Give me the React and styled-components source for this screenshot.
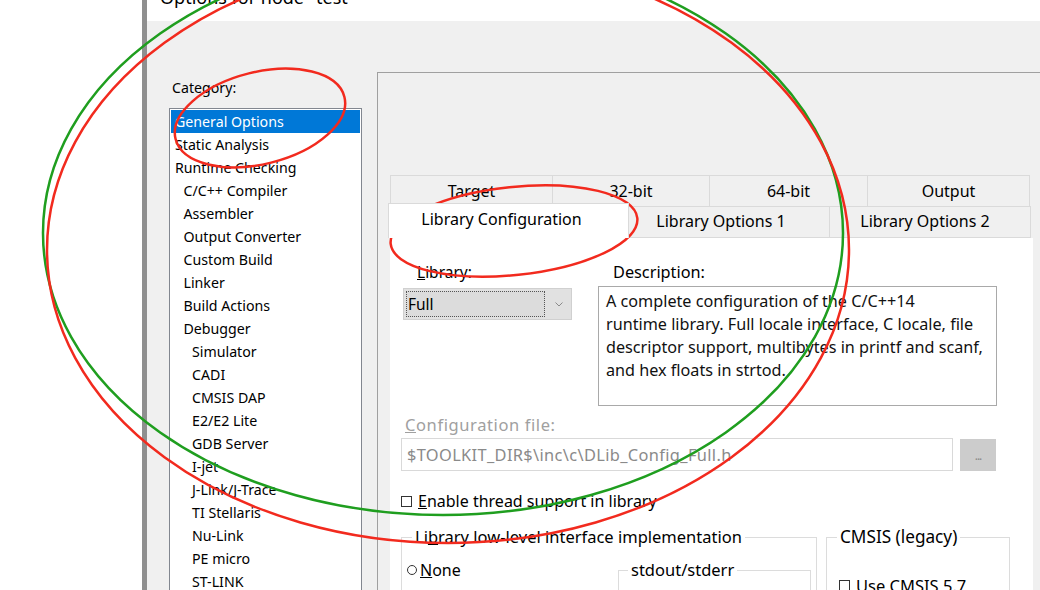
import React from 'react';
import styled, { createGlobalStyle } from 'styled-components';

const Global = createGlobalStyle`
  html, body { margin: 0; padding: 0; background: #fff; }
  body { font-family: "Noto Sans", "Open Sans", sans-serif; color: #000; }
  #root { width: 1040px; height: 590px; overflow: hidden; }
  * { box-sizing: border-box; }
`;

const Page = styled.div`
  position: relative;
  width: 1040px;
  height: 590px;
  overflow: hidden;
  display: flex;
  background: #fff;
`;

const Desktop = styled.div`
  width: 142px;
  flex-shrink: 0;
  background: #fff;
`;

const Window = styled.div`
  flex: 1;
  min-width: 0;
  display: flex;
  flex-direction: column;
  border-left: 5px solid #8f8f8f;
`;

const TitleBar = styled.div`
  height: 21px;
  flex-shrink: 0;
  background: #fff;
  overflow: hidden;
  padding-left: 13px;
`;

const TitleText = styled.div`
  font-size: 18px;
  line-height: 18px;
  margin-top: -12px;
  white-space: nowrap;
`;

const Body = styled.div`
  flex: 1;
  min-height: 0;
  background: #f0f0f0;
  display: flex;
  align-items: stretch;
  gap: 15px;
  padding: 51px 0 0 22px;
  overflow: hidden;
`;

const CategoryColumn = styled.div`
  width: 193px;
  flex-shrink: 0;
  padding-top: 6px;
`;

const CategoryLabel = styled.div`
  font-size: 14.2px;
  line-height: 20px;
  padding-left: 3px;
  margin-bottom: 10px;
`;

const CategoryList = styled.div`
  background: #fff;
  border: 1px solid #828790;
  padding: 1px;
  height: 540px;
`;

const CategoryItem = styled.div`
  height: 23px;
  line-height: 23px;
  font-size: 14.2px;
  white-space: nowrap;
  padding-left: ${p => 4 + p.$level * 8.5}px;
  background: ${p => (p.$selected ? '#0078d7' : 'transparent')};
  color: ${p => (p.$selected ? '#fff' : '#000')};
`;

const RightPanel = styled.div`
  flex: 1;
  min-width: 0;
  border-top: 1px solid #a0a0a0;
  border-left: 1px solid #a0a0a0;
  padding: 102px 0 0 12px;
  display: flex;
  flex-direction: column;
`;

const TabRowBack = styled.div`
  display: flex;
  height: 31px;
  margin-left: 1px;
`;

const TabRowFront = styled.div`
  display: flex;
  height: 32px;
  margin-left: -1px;
`;

const Tab = styled.div`
  width: ${p => p.$w}px;
  flex-shrink: 0;
  border: 1px solid #dadada;
  margin-left: -1px;
  background: ${p => (p.$active ? '#fff' : '#f0f0f0')};
  font-size: 16px;
  text-align: center;
  white-space: nowrap;
  line-height: ${p => (p.$active ? 30 : 29)}px;
  height: ${p => (p.$active ? 35 : 32)}px;
  margin-top: ${p => (p.$active ? -3 : 0)}px;
  padding-right: ${p => p.$shift || 0}px;
  ${p => (p.$active ? 'border-bottom: none; position: relative; z-index: 1;' : '')}
  ${p => (p.$back ? 'height: 31px; border-bottom: none; line-height: 30px;' : '')}
`;

const ContentPane = styled.div`
  width: 643px;
  flex: 1;
  background: #fff;
  padding: 24px 0 0 11px;
  display: flex;
  flex-direction: column;
`;

const TopSection = styled.div`
  display: flex;
  gap: 26px;
  margin-left: 2px;
`;

const FieldColumn = styled.div`
  width: ${p => p.$w}px;
  flex-shrink: 0;
  display: flex;
  flex-direction: column;
`;

const FieldLabel = styled.div`
  font-size: ${p => p.$size || 15.5}px;
  line-height: 20px;
  margin-left: ${p => p.$indent}px;
  margin-bottom: ${p => p.$gap}px;
  color: ${p => (p.$disabled ? '#a0a0a0' : '#000')};
  white-space: nowrap;
`;

const Dropdown = styled.div`
  height: 32px;
  background: #e1e1e1;
  border: 1px solid #d0d0d0;
  display: flex;
  align-items: center;
  padding: 0 8px 0 2px;
  gap: 10px;
`;

const DropdownValue = styled.div`
  flex: 1;
  height: 26px;
  border: 1px dotted #555;
  background: #dcdcdc;
  font-size: 15.5px;
  line-height: 24px;
  padding-left: 1px;
`;

const DescBox = styled.div`
  height: 120px;
  border: 1px solid #a9a9a9;
  padding: 3px 7px;
  font-size: 16.2px;
  line-height: 23px;
  color: #111;
  white-space: nowrap;
  overflow: hidden;
`;

const ConfigLabel = styled(FieldLabel)`
  margin-top: 9px;
  letter-spacing: 0.6px;
`;

const ConfigRow = styled.div`
  display: flex;
  gap: 7px;
  margin-top: 3px;
`;

const PathInput = styled.div`
  width: 552px;
  height: 33px;
  border: 1px solid #d9d9d9;
  color: #8a8a8a;
  font-size: 16.4px;
  letter-spacing: 0.35px;
  line-height: 31px;
  padding-left: 5px;
  white-space: nowrap;
`;

const BrowseButton = styled.div`
  width: 36px;
  height: 32px;
  margin-top: 1px;
  background: #cccccc;
  color: #8a8a8a;
  font-size: 12px;
  display: flex;
  align-items: center;
  justify-content: center;
  letter-spacing: -1px;
`;

const CheckRow = styled.label`
  display: flex;
  align-items: center;
  gap: ${p => p.$gap ?? 6}px;
  height: 20px;
  margin-top: ${p => p.$top ?? 0}px;
  font-size: ${p => p.$size || 16}px;
  white-space: nowrap;
`;

const CheckBox = styled.span`
  width: 11px;
  height: 11px;
  border: 1px solid #333;
  background: #fff;
  flex-shrink: 0;
`;

const RadioDot = styled.span`
  width: 10px;
  height: 10px;
  border: 1px solid #333;
  border-radius: 50%;
  background: #fff;
  flex-shrink: 0;
`;

const GroupsRow = styled.div`
  display: flex;
  gap: 9px;
  margin-top: 16px;
`;

const Group = styled.fieldset`
  width: ${p => p.$w}px;
  flex-shrink: 0;
  margin: 0;
  border: 1px solid #dcdcdc;
  padding: ${p => p.$pad};
  height: ${p => p.$h}px;
  min-width: 0;
`;

const GroupLegend = styled.legend`
  font-size: ${p => p.$size || 16.5}px;
  line-height: 20px;
  padding: 0 3px;
  margin-left: ${p => p.$indent}px;
  white-space: nowrap;
`;

const GroupInner = styled.div`
  display: flex;
  justify-content: space-between;
  align-items: flex-start;
`;

const Overlay = styled.svg`
  position: absolute;
  left: 0;
  top: 0;
  width: 1040px;
  height: 590px;
  pointer-events: none;
`;

const Chevron = () => (
  <svg width="8" height="5" viewBox="0 0 8 5">
    <path d="M0.5 0.5 L4 4 L7.5 0.5" fill="none" stroke="#8a8a8a" strokeWidth="1" />
  </svg>
);

const categories = [
  ['General Options', 0],
  ['Static Analysis', 0],
  ['Runtime Checking', 0],
  ['C/C++ Compiler', 1],
  ['Assembler', 1],
  ['Output Converter', 1],
  ['Custom Build', 1],
  ['Linker', 1],
  ['Build Actions', 1],
  ['Debugger', 1],
  ['Simulator', 2],
  ['CADI', 2],
  ['CMSIS DAP', 2],
  ['E2/E2 Lite', 2],
  ['GDB Server', 2],
  ['I-jet', 2],
  ['J-Link/J-Trace', 2],
  ['TI Stellaris', 2],
  ['Nu-Link', 2],
  ['PE micro', 2],
  ['ST-LINK', 2],
  ['Third-Party Driver', 2],
];

const backTabs = [
  ['Target', 163],
  ['32-bit', 158],
  ['64-bit', 159],
  ['Output', 163],
];

const frontTabs = [
  ['Library Configuration', 241, true, 14],
  ['Library Options 1', 202, false, 16],
  ['Library Options 2', 202, false, 10],
];

const descLines = [
  'A complete configuration of the C/C++14',
  'runtime library. Full locale interface, C locale, file',
  'descriptor support, multibytes in printf and scanf,',
  'and hex floats in strtod.',
];

export default function App() {
  return (
    <>
      <Global />
      <Page>
        <Desktop />
        <Window>
          <TitleBar>
            <TitleText>Options for node "test"</TitleText>
          </TitleBar>
          <Body>
            <CategoryColumn>
              <CategoryLabel>Category:</CategoryLabel>
              <CategoryList>
                {categories.map(([name, level], i) => (
                  <CategoryItem key={name} $level={level} $selected={i === 0}>
                    {name}
                  </CategoryItem>
                ))}
              </CategoryList>
            </CategoryColumn>
            <RightPanel>
              <TabRowBack>
                {backTabs.map(([t, w]) => (
                  <Tab key={t} $w={w} $back>
                    {t}
                  </Tab>
                ))}
              </TabRowBack>
              <TabRowFront>
                {frontTabs.map(([t, w, a, s]) => (
                  <Tab key={t} $w={w} $active={a} $shift={s}>
                    {t}
                  </Tab>
                ))}
              </TabRowFront>
              <ContentPane>
                <TopSection>
                  <FieldColumn $w={169}>
                    <FieldLabel $indent={14} $gap={6}>
                      <u>L</u>ibrary:
                    </FieldLabel>
                    <Dropdown>
                      <DropdownValue>Full</DropdownValue>
                      <Chevron />
                    </Dropdown>
                  </FieldColumn>
                  <FieldColumn $w={399}>
                    <FieldLabel $indent={15} $gap={4} $size={16.3}>
                      Description:
                    </FieldLabel>
                    <DescBox>
                      {descLines.map(l => (
                        <div key={l}>{l}</div>
                      ))}
                    </DescBox>
                  </FieldColumn>
                </TopSection>
                <ConfigLabel $indent={4} $gap={0} $size={16.5} $disabled>
                  <u>C</u>onfiguration file:
                </ConfigLabel>
                <ConfigRow>
                  <PathInput>$TOOLKIT_DIR$\inc\c\DLib_Config_Full.h</PathInput>
                  <BrowseButton>...</BrowseButton>
                </ConfigRow>
                <CheckRow $top={20}>
                  <CheckBox />
                  <span>
                    <u>E</u>nable thread support in library
                  </span>
                </CheckRow>
                <GroupsRow>
                  <Group $w={416} $h={80} $pad="13px 5px 0 5px">
                    <GroupLegend $indent={5}>
                      Li<u>b</u>rary low-level interface implementation
                    </GroupLegend>
                    <GroupInner>
                      <CheckRow $gap={3}>
                        <RadioDot />
                        <span>
                          <u>N</u>one
                        </span>
                      </CheckRow>
                      <Group $w={193} $h={60} $pad="0">
                        <GroupLegend $indent={9}>stdout/stderr</GroupLegend>
                      </Group>
                    </GroupInner>
                  </Group>
                  <Group $w={184} $h={80} $pad="28px 5px 0 12px">
                    <GroupLegend $indent={-2} $size={17.2}>CMSIS (legacy)</GroupLegend>
                    <CheckRow $size={16.5}>
                      <CheckBox />
                      <span>Use CMSIS 5.7</span>
                    </CheckRow>
                  </Group>
                </GroupsRow>
              </ContentPane>
            </RightPanel>
          </Body>
        </Window>
        <Overlay viewBox="0 0 1040 590">
          <ellipse cx="443" cy="233" rx="400" ry="282" fill="none" stroke="#1f9e1f" strokeWidth="2.5" />
          <ellipse cx="448" cy="250" rx="401" ry="293" fill="none" stroke="#f22a1e" strokeWidth="2.5" />
          <ellipse cx="260" cy="118" rx="87" ry="46" transform="rotate(-14 260 118)" fill="none" stroke="#f22a1e" strokeWidth="2.5" />
          <ellipse cx="514" cy="231" rx="124" ry="44" transform="rotate(-6 514 231)" fill="none" stroke="#f22a1e" strokeWidth="2.5" />
        </Overlay>
      </Page>
    </>
  );
}
